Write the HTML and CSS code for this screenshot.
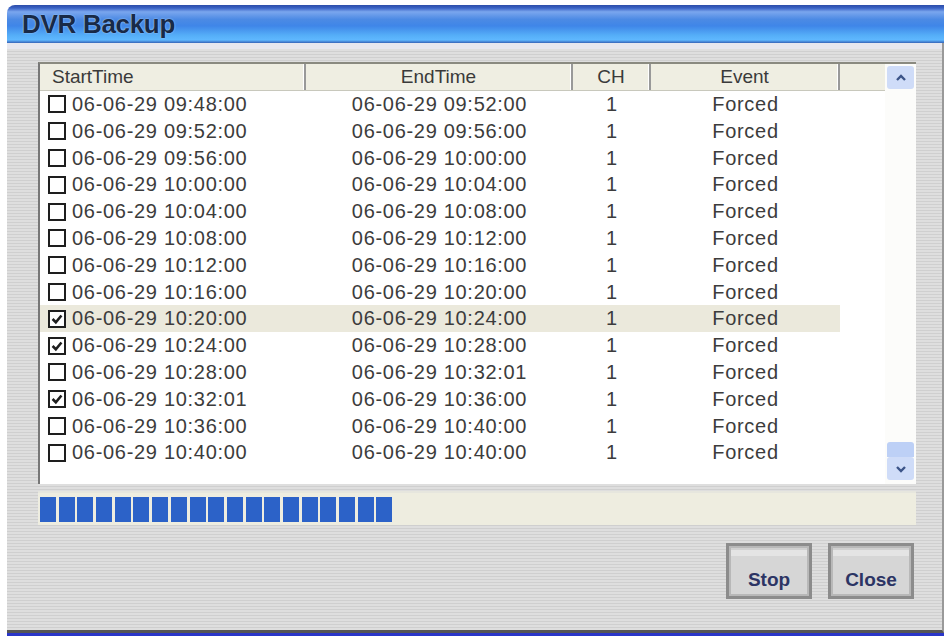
FILE: index.html
```html
<!DOCTYPE html>
<html lang="en">
<head>
  <meta charset="UTF-8">
  <title>DVR Backup</title>
  <link rel="stylesheet" href="styles.css">
</head>
<body>
  <div class="window">
    <div class="titlebar"><span class="title">DVR Backup</span></div>
    <div class="client">
      <div class="listbox">
        <div class="table">
          <div class="head">
            <div class="hcell left">StartTime</div>
            <div class="hcell">EndTime</div>
            <div class="hcell">CH</div>
            <div class="hcell">Event</div>
            <div class="hcell blank"></div>
          </div>
          <div class="row"><div class="cell first"><span class="check"></span>06-06-29 09:48:00</div><div class="cell">06-06-29 09:52:00</div><div class="cell">1</div><div class="cell">Forced</div></div>
          <div class="row"><div class="cell first"><span class="check"></span>06-06-29 09:52:00</div><div class="cell">06-06-29 09:56:00</div><div class="cell">1</div><div class="cell">Forced</div></div>
          <div class="row"><div class="cell first"><span class="check"></span>06-06-29 09:56:00</div><div class="cell">06-06-29 10:00:00</div><div class="cell">1</div><div class="cell">Forced</div></div>
          <div class="row"><div class="cell first"><span class="check"></span>06-06-29 10:00:00</div><div class="cell">06-06-29 10:04:00</div><div class="cell">1</div><div class="cell">Forced</div></div>
          <div class="row"><div class="cell first"><span class="check"></span>06-06-29 10:04:00</div><div class="cell">06-06-29 10:08:00</div><div class="cell">1</div><div class="cell">Forced</div></div>
          <div class="row"><div class="cell first"><span class="check"></span>06-06-29 10:08:00</div><div class="cell">06-06-29 10:12:00</div><div class="cell">1</div><div class="cell">Forced</div></div>
          <div class="row"><div class="cell first"><span class="check"></span>06-06-29 10:12:00</div><div class="cell">06-06-29 10:16:00</div><div class="cell">1</div><div class="cell">Forced</div></div>
          <div class="row"><div class="cell first"><span class="check"></span>06-06-29 10:16:00</div><div class="cell">06-06-29 10:20:00</div><div class="cell">1</div><div class="cell">Forced</div></div>
          <div class="row selected"><div class="cell first"><span class="check on"><svg viewBox="0 0 12 12"><path d="M2.2 6 L5 8.8 L9.8 3" /></svg></span>06-06-29 10:20:00</div><div class="cell">06-06-29 10:24:00</div><div class="cell">1</div><div class="cell">Forced</div></div>
          <div class="row"><div class="cell first"><span class="check on"><svg viewBox="0 0 12 12"><path d="M2.2 6 L5 8.8 L9.8 3" /></svg></span>06-06-29 10:24:00</div><div class="cell">06-06-29 10:28:00</div><div class="cell">1</div><div class="cell">Forced</div></div>
          <div class="row"><div class="cell first"><span class="check"></span>06-06-29 10:28:00</div><div class="cell">06-06-29 10:32:01</div><div class="cell">1</div><div class="cell">Forced</div></div>
          <div class="row"><div class="cell first"><span class="check on"><svg viewBox="0 0 12 12"><path d="M2.2 6 L5 8.8 L9.8 3" /></svg></span>06-06-29 10:32:01</div><div class="cell">06-06-29 10:36:00</div><div class="cell">1</div><div class="cell">Forced</div></div>
          <div class="row"><div class="cell first"><span class="check"></span>06-06-29 10:36:00</div><div class="cell">06-06-29 10:40:00</div><div class="cell">1</div><div class="cell">Forced</div></div>
          <div class="row"><div class="cell first"><span class="check"></span>06-06-29 10:40:00</div><div class="cell">06-06-29 10:40:00</div><div class="cell">1</div><div class="cell">Forced</div></div>
        </div>
        <div class="scrollbar">
          <div class="arrow"><svg viewBox="0 0 12 8"><path d="M2 6 L6 2 L10 6" /></svg></div>
          <div class="track"></div>
          <div class="thumb"></div>
          <div class="arrow"><svg viewBox="0 0 12 8"><path d="M2 2 L6 6 L10 2" /></svg></div>
        </div>
      </div>
      <div class="progress">
        <span class="block"></span><span class="block"></span><span class="block"></span><span class="block"></span><span class="block"></span>
        <span class="block"></span><span class="block"></span><span class="block"></span><span class="block"></span><span class="block"></span>
        <span class="block"></span><span class="block"></span><span class="block"></span><span class="block"></span><span class="block"></span>
        <span class="block"></span><span class="block"></span><span class="block"></span><span class="block"></span>
      </div>
      <div class="buttons">
        <button class="btn">Stop</button>
        <button class="btn">Close</button>
      </div>
    </div>
  </div>
</body>
</html>
```

FILE: styles.css
```css
body { margin: 0; background: #fff; font-family: "Liberation Sans", Arial, sans-serif; }

.window {
  margin: 5px 7px 0 7px;
  width: 937px;
  height: 628px;
  display: flex;
  flex-direction: column;
  border-bottom: 3px solid #2a36c8;
}

.titlebar {
  height: 38px;
  border-radius: 8px 0 0 0;
  background: linear-gradient(#2c4ca8 0, #3a62c4 8%, #7aa6ee 18%, #4c8ae4 38%, #3f86e8 55%, #55aef8 80%, #5fb8ff 92%, #3462b8 100%);
  display: flex;
  align-items: center;
}
.title {
  margin-left: 15px;
  font-size: 26px;
  font-weight: bold;
  color: #182a48;
  text-shadow: 0 0 2px #9ccaf8, 0 0 1px #9ccaf8;
  letter-spacing: -0.3px;
}

.client {
  flex: 1;
  padding: 19px 26px 0 31px;
  border-bottom: 3px solid #555;
  border-right: 2px solid #999;
  background: repeating-linear-gradient(#dedede 0, #dedede 2px, #cfcfcf 2px, #cfcfcf 3px);
  box-shadow: inset 0 6px 0 #e6e6ee;
}

.listbox {
  height: 420px;
  display: flex;
  background: #fff;
  border-top: 2px solid #8a8a80;
  border-left: 2px solid #777;
}

.table { width: 845px; }

.head {
  height: 26px;
  display: grid;
  grid-template-columns: 266px 267px 78px 189px 45px;
  background: #efeee2;
  border-bottom: 1px solid #c8c8bc;
}
.hcell {
  font-size: 19px;
  color: #3a3a3a;
  text-align: center;
  line-height: 26px;
  border-right: 2px solid #999;
  box-shadow: inset -1px 0 0 #fff;
}
.hcell.left { text-align: left; padding-left: 12px; }
.hcell.blank { border-right: none; box-shadow: none; }

.row {
  width: 800px;
  height: 26.8px;
  display: grid;
  grid-template-columns: 266px 267px 78px 189px;
  font-size: 20px;
  letter-spacing: 0.7px;
  color: #3c3c3c;
  line-height: 26.8px;
}
.row.selected { background: #ebe9dc; }
.cell { text-align: center; white-space: nowrap; }
.cell.first { text-align: left; padding-left: 8px; display: flex; align-items: center; }

.check {
  flex-shrink: 0;
  width: 14px;
  height: 14px;
  border: 2px solid #1e1e1e;
  margin-right: 6px;
  background: #fff;
  display: flex;
}
.check svg { width: 14px; height: 14px; }
.check svg path { fill: none; stroke: #1e1e1e; stroke-width: 2.2; }

.scrollbar {
  width: 33px;
  display: flex;
  flex-direction: column;
  align-items: center;
  background: #fcfcfa;
  padding: 2px 0 4px 0;
}
.arrow {
  width: 27px;
  height: 23px;
  border-radius: 3px;
  background: #cfdcf8;
  display: flex;
  align-items: center;
  justify-content: center;
}
.arrow svg { width: 12px; height: 8px; }
.arrow svg path { fill: none; stroke: #3c5488; stroke-width: 2.4; }
.track { flex: 1; }
.thumb { width: 27px; height: 15px; background: #bdd0f6; border-radius: 3px 3px 0 0; }

.progress {
  margin-top: 7px;
  height: 26px;
  padding: 4px 2px 2px 2px;
  background: #eeede0;
  border-top: 2px solid #e6e6de;
  display: flex;
  gap: 2.7px;
}
.block { width: 16px; height: 25px; background: #2c62c8; }

.buttons {
  display: flex;
  justify-content: flex-end;
  gap: 16px;
  margin-top: 18px;
  padding-right: 2px;
}
.btn {
  width: 86px;
  height: 56px;
  border: 3px solid #8c8c8c;
  background: linear-gradient(#d0d0d0 0, #d0d0d0 4px, #e4e4e4 4px, #e4e4e4 10px, #d6d6d6 10px);
  box-shadow: inset 0 0 0 2px #b8b8b8;
  font-family: "Liberation Sans", Arial, sans-serif;
  font-weight: bold;
  font-size: 19px;
  color: #2c3464;
  padding: 18px 0 0 0;
}
```
